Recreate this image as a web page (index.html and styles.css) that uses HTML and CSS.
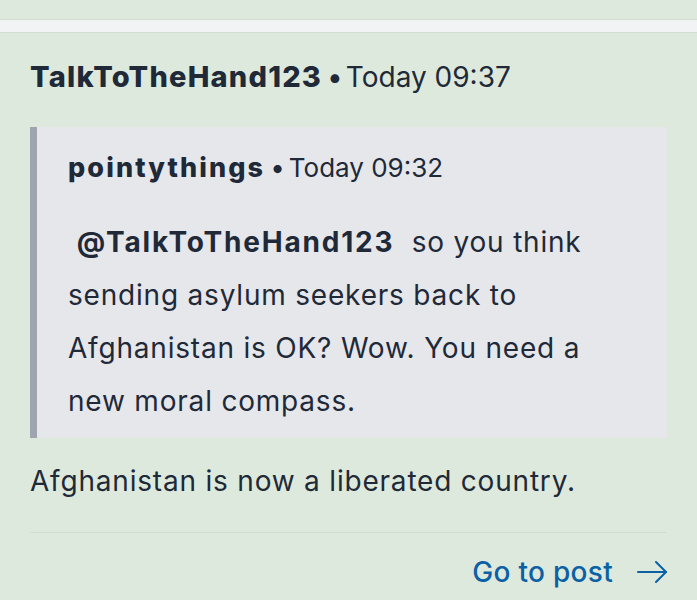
FILE: index.html
```html
<!DOCTYPE html>
<html lang="en">
<head>
<meta charset="utf-8">
<link rel="stylesheet" href="styles.css">
</head>
<body>
<div class="topbar"></div>
<article class="post">
  <div class="post-header"><span class="author">TalkToTheHand123</span><span class="dot">•</span><span class="time">Today 09:37</span></div>
  <blockquote class="quote">
    <div class="quote-header"><span class="author">pointythings</span><span class="dot">•</span><span class="time">Today 09:32</span></div>
    <p class="quote-body">&nbsp;<span class="mention">@TalkToTheHand123</span>&nbsp; so you think sending asylum seekers back to Afghanistan is OK? Wow. You need a new moral compass.</p>
  </blockquote>
  <p class="reply">Afghanistan is now a liberated country.</p>
  <div class="divider"></div>
  <div class="footer">
    <a class="go" href="#">Go to post
      <svg class="arrow" width="30" height="24" viewBox="0 0 30 24" fill="none" stroke="currentColor" stroke-width="2" stroke-linecap="round" stroke-linejoin="round"><line x1="1" y1="12" x2="29" y2="12"/><polyline points="19,2 29,12 19,22"/></svg>
    </a>
  </div>
</article>
</body>
</html>
```
FILE: styles.css
```css
* { box-sizing: border-box; }
html, body { margin: 0; padding: 0; }
body {
  background: #dde9dd;
  font-family: Inter, "Noto Sans", sans-serif;
  color: #1f2937;
  width: 697px;
  height: 600px;
  overflow: hidden;
}
.topbar {
  margin-top: 19px;
  height: 14px;
  background: #f2f3f5;
  border-top: 1px solid #d1dfd1;
  border-bottom: 1px solid #d1dfd1;
}
.post { padding: 0 30px; }
.post-header {
  margin-top: 24px;
  height: 40px;
  line-height: 40px;
  font-size: 28px;
  white-space: nowrap;
}
.post-header .author {
  font-size: 29px;
  font-weight: 800;
  letter-spacing: 1.2px;
}
.post-header .dot { margin: 0 3px 0 5px; }
.quote {
  margin: 30px 0 0 0;
  background: #e5e7eb;
  border-left: 7px solid #9ea4b0;
  padding: 21px 30px 10px 31px;
}
.quote-header {
  height: 40px;
  line-height: 40px;
  font-size: 26px;
  white-space: nowrap;
}
.quote-header .author {
  font-size: 27px;
  font-weight: 800;
  letter-spacing: 2.1px;
}
.quote-header .dot { margin: 0 4px 0 5px; }
.quote-body {
  margin: 28px 0 0 0;
  font-size: 28px;
  letter-spacing: 0.8px;
  line-height: 53px;
}
.mention {
  font-weight: 700;
  letter-spacing: 1.8px;
}
.reply {
  margin: 23px 0 0 0;
  font-size: 28px;
  letter-spacing: 0.8px;
  line-height: 40px;
}
.divider {
  margin-top: 31px;
  border-top: 1px solid #cfdecf;
}
.footer {
  margin-top: 19px;
  display: flex;
  justify-content: flex-end;
}
.go {
  display: flex;
  align-items: center;
  gap: 24px;
  color: #0b61a4;
  text-decoration: none;
  font-size: 28px;
  font-weight: 500;
  letter-spacing: 0.3px;
  line-height: 40px;
}
.arrow { display: block; }
```
